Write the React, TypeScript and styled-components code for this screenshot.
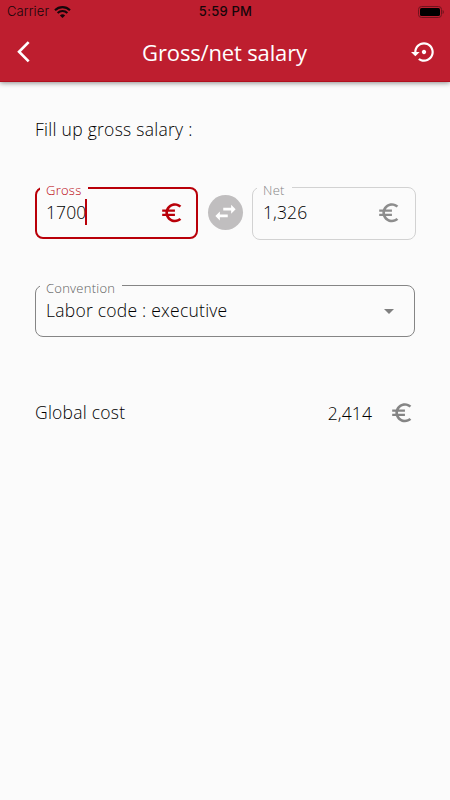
import React from "react";
import styled, { createGlobalStyle } from "styled-components";

const GlobalStyle = createGlobalStyle`
  * { box-sizing: border-box; }
  body { margin: 0; background: #fbfbfb; }
`;

const Screen = styled.div`
  width: 450px;
  height: 800px;
  overflow: hidden;
  background: #fbfbfb;
  color: #000;
  font-family: "Open Sans", sans-serif;
`;

const Header = styled.header`
  height: 82px;
  background: #be1e2f;
  border-bottom: 1px solid #b0101f;
  box-shadow: 0 1px 5px rgba(0, 0, 0, 0.45);
`;

const StatusBar = styled.div`
  display: grid;
  grid-template-columns: 1fr auto 1fr;
  align-items: center;
  height: 23px;
  padding: 0 6px 0 7px;
  color: #16060a;
  font: 400 13px/23px Inter, sans-serif;
`;

const Carrier = styled.div`
  display: flex;
  align-items: center;
  gap: 5px;
  font-weight: 300;
  letter-spacing: 0.1px;
`;

const Clock = styled.div`
  font-weight: 500;
  letter-spacing: 0.2px;
`;

const Battery = styled.div`
  display: flex;
  justify-content: flex-end;
`;

const TitleBar = styled.div`
  display: grid;
  grid-template-columns: 48px 1fr 48px;
  align-items: center;
  height: 58px;
  padding: 0 2px 0 0;
  color: #fff;
`;

const Title = styled.h1`
  margin: 0;
  padding-left: 1px;
  text-align: center;
  font-size: 22px;
  font-weight: 400;
  line-height: 30px;
  letter-spacing: -0.15px;
`;

const IconButton = styled.button`
  display: flex;
  align-items: center;
  justify-content: center;
  height: 48px;
  padding: 0;
  border: 0;
  background: none;
  color: inherit;
`;

const Form = styled.main`
  padding: 35px 34px 0 35px;
`;

const Prompt = styled.p`
  margin: 0;
  height: 26px;
  font-size: 17.5px;
  line-height: 25px;
  font-weight: 300;
  letter-spacing: 0.27px;
`;

const SalaryRow = styled.div`
  display: grid;
  grid-template-columns: 163px 54px 164px;
  align-items: start;
  margin-top: 39px;
`;

const Outline = styled.fieldset<{ $color: string; $thick?: boolean; $height?: number; $end?: number }>`
  min-width: 0;
  height: ${(p) => p.$height ?? 57}px;
  margin: 0;
  padding: 0 ${(p) => p.$end ?? 13}px 0 ${(p) => (p.$thick ? 3 : 4)}px;
  border: ${(p) => (p.$thick ? 2 : 1)}px solid ${(p) => p.$color};
  border-radius: 8px;
`;

const Legend = styled.legend<{ $color: string; $thick?: boolean }>`
  height: ${(p) => (p.$thick ? 12 : 11)}px;
  margin-bottom: ${(p) => (p.$thick ? 3 : 4)}px;
  padding: 0 7px 0 6px;
  color: ${(p) => p.$color};
  font-size: 13px;
  line-height: 16px;
  font-weight: 300;
  letter-spacing: 0.25px;
`;

const FieldBody = styled.div`
  display: flex;
  align-items: center;
  justify-content: space-between;
  height: 30px;
  padding-left: 6px;
`;

const Value = styled.span`
  display: flex;
  align-items: center;
  font-size: 17.5px;
  line-height: 24px;
  font-weight: 300;
  letter-spacing: 0.24px;
`;

const Amount = styled(Value)`
  letter-spacing: 0.1px;
`;

const Total = styled(Amount)`
  padding-top: 1px;
`;

const Caret = styled.span`
  width: 2px;
  height: 26px;
  margin-left: -1px;
  background: #b90009;
`;

const SwapButton = styled.button`
  display: flex;
  align-items: center;
  justify-content: center;
  width: 35px;
  height: 35px;
  margin: 13px 0 0 9.6px;
  padding: 0;
  border: 0;
  border-radius: 50%;
  background: #c0bebf;
  color: #fff;
`;

const ConventionRow = styled.div`
  margin: 40px 1px 0 0;
`;

const CostRow = styled.div`
  display: grid;
  grid-template-columns: 1fr auto 25px;
  column-gap: 17px;
  align-items: center;
  height: 30px;
  margin-top: 60px;
  padding-right: 2px;
`;

const Icon = styled.svg<{ $drop?: number }>`
  display: block;
  flex: none;
  margin-top: ${(p) => (p.$drop ?? 0) * 2}px;
`;

type GlyphProps = { d: string; size?: number; color?: string; drop?: number };

const Glyph = ({ d, size = 24, color = "currentColor", drop }: GlyphProps) => (
  <Icon width={size} height={size} viewBox="0 0 24 24" fill={color} $drop={drop} aria-hidden>
    <path d={d} />
  </Icon>
);

const EURO =
  "M15 18.5c-2.51 0-4.68-1.42-5.76-3.5H15v-2H8.58c-.05-.33-.08-.66-.08-1s.03-.67.08-1H15V9H9.24C10.32 6.92 12.5 5.5 15 5.5c1.61 0 3.09.59 4.23 1.57L21 5.3C19.41 3.87 17.3 3 15 3c-3.92 0-7.24 2.51-8.48 6H3v2h3.06c-.04.33-.06.66-.06 1s.02.67.06 1H3v2h3.52c1.24 3.49 4.56 6 8.48 6 2.31 0 4.41-.87 6-2.3l-1.78-1.77c-1.13.98-2.6 1.57-4.22 1.57z";
const BACK = "M17.51 3.87L15.73 2.1 5.84 12l9.9 9.9 1.77-1.77L9.38 12l8.13-8.13z";
const RESTORE =
  "M14 12c0-1.1-.9-2-2-2s-2 .9-2 2 .9 2 2 2 2-.9 2-2zm-2-9c-4.97 0-9 4.03-9 9H0l4 4 4-4H5c0-3.87 3.13-7 7-7s7 3.13 7 7-3.13 7-7 7c-1.51 0-2.91-.49-4.06-1.3l-1.42 1.44C8.04 20.3 9.94 21 12 21c4.97 0 9-4.03 9-9s-4.03-9-9-9z";
const SWAP = "M6.99 11L3 15l3.99 4v-2.7H14v-2.6H6.99zM21 9l-3.99-4v2.7H10v2.6h7.01V13z";
const DROP = "M7 10l5 5 5-5z";

const WifiIcon = () => (
  <svg width="17" height="12" viewBox="0 0 17 12" fill="none" stroke="#16060a" aria-hidden>
    <path d="M1 4.3C5.2.1 11.8.1 16 4.3" strokeWidth="2.1" />
    <path d="M3.6 7c2.8-2.7 7-2.7 9.8 0" strokeWidth="2" />
    <path d="M8.5 12L5.9 9.4c1.5-1.4 3.7-1.4 5.2 0z" fill="#16060a" stroke="none" />
  </svg>
);

const BatteryIcon = () => (
  <svg width="26" height="12" viewBox="0 0 26 12" aria-hidden>
    <rect x="0.5" y="0.5" width="23" height="11" rx="3" fill="none" stroke="#70131d" />
    <rect x="2" y="2" width="20" height="8" rx="1.6" fill="#000" />
    <path d="M24.6 4c1.6.6 1.6 3.4 0 4z" fill="#70131d" />
  </svg>
);

export default function App() {
  return (
    <>
      <GlobalStyle />
      <Screen>
        <Header>
          <StatusBar>
            <Carrier>Carrier <WifiIcon /></Carrier>
            <Clock>5:59 PM</Clock>
            <Battery><BatteryIcon /></Battery>
          </StatusBar>
          <TitleBar>
            <IconButton aria-label="Back"><Glyph d={BACK} size={25.5} /></IconButton>
            <Title>Gross/net salary</Title>
            <IconButton aria-label="Reset"><Glyph d={RESTORE} size={26} /></IconButton>
          </TitleBar>
        </Header>
        <Form>
          <Prompt>Fill up gross salary :</Prompt>
          <SalaryRow>
            <Outline $color="#b90009" $thick $end={12}>
              <Legend $color="#b90009" $thick>Gross</Legend>
              <FieldBody>
                <Amount>1700<Caret /></Amount>
                <Glyph d={EURO} size={25.5} color="#b90009" drop={1} />
              </FieldBody>
            </Outline>
            <SwapButton aria-label="Swap gross and net"><Glyph d={SWAP} size={27} /></SwapButton>
            <Outline $color="#d2d2d2" $height={58} $end={14}>
              <Legend $color="#858585">Net</Legend>
              <FieldBody>
                <Amount>1,326</Amount>
                <Glyph d={EURO} size={25.5} color="#8d8d8d" drop={1} />
              </FieldBody>
            </Outline>
          </SalaryRow>
          <ConventionRow>
            <Outline $color="#858585">
              <Legend $color="#606060">Convention</Legend>
              <FieldBody>
                <Value>Labor code : executive</Value>
                <Glyph d={DROP} color="#808080" drop={1} />
              </FieldBody>
            </Outline>
          </ConventionRow>
          <CostRow>
            <Value>Global cost</Value>
            <Total>2,414</Total>
            <Glyph d={EURO} size={25.5} color="#858585" drop={1} />
          </CostRow>
        </Form>
      </Screen>
    </>
  );
}
